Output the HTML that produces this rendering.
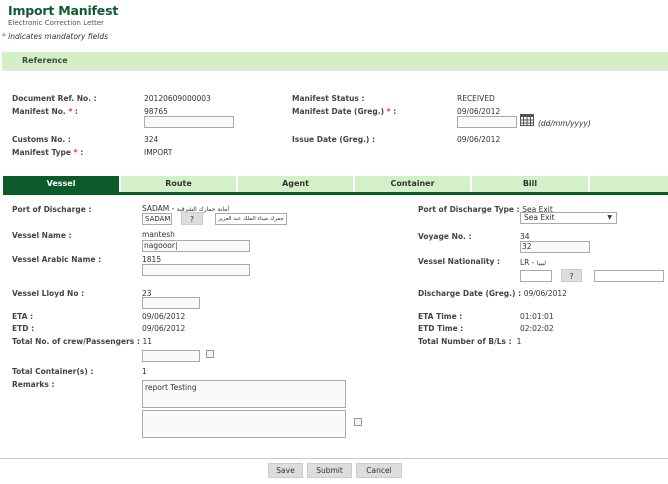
<!DOCTYPE html>
<html><head><meta charset="utf-8"><style>
*{margin:0;padding:0;box-sizing:border-box}
body{width:668px;height:484px;background:#fff;position:relative;overflow:hidden;font-family:"DejaVu Sans","Liberation Sans","Noto Sans CJK SC",sans-serif;font-size:7.5px;color:#333}
.a{position:absolute;white-space:nowrap;line-height:9px}
.l{font-weight:bold;color:#444}
.r{color:#e33}
.in{position:absolute;border:1px solid #aaa;background:#fafafa;height:12px}
.bt{position:absolute;background:#ddd;border:1px solid #ccc;text-align:center;line-height:13px;color:#333}
.tab{position:absolute;top:176px;height:16px;background:#d4f0c8;border-right:2px solid #fff;font-weight:bold;text-align:center;line-height:16px;color:#333;font-size:8px}
.cb{position:absolute;width:8px;height:8px;border:1px solid #999;background:#f4f4f4}
</style></head><body>
<div class="a" style="left:8px;top:3px;font-size:12.5px;line-height:16px;font-weight:bold;color:#0f5a32;letter-spacing:-0.2px">Import Manifest</div>
<div class="a" style="left:8px;top:19px;font-size:7px;color:#555">Electronic Correction Letter</div>
<div class="a" style="left:2px;top:32px;font-style:italic;color:#333"><span class="r">*</span> indicates mandatory fields</div>
<div style="position:absolute;left:2px;top:52px;width:666px;height:17px;background:#d4efc6"></div>
<div style="position:absolute;left:2px;top:69px;width:666px;height:2px;background:#e6e6e6"></div>
<div class="a l" style="left:22px;top:56px;font-size:8px;color:#3c4a3c">Reference</div>

<div class="a l" style="left:12px;top:94px">Document Ref. No. :</div>
<div class="a" style="left:144px;top:94px">20120609000003</div>
<div class="a l" style="left:12px;top:107px">Manifest No. <span class="r">*</span> :</div>
<div class="a" style="left:144px;top:107px">98765</div>
<div class="in" style="left:144px;top:116px;width:90px"></div>
<div class="a l" style="left:12px;top:135px">Customs No. :</div>
<div class="a" style="left:144px;top:135px">324</div>
<div class="a l" style="left:12px;top:148px">Manifest Type <span class="r">*</span> :</div>
<div class="a" style="left:144px;top:148px">IMPORT</div>

<div class="a l" style="left:292px;top:94px">Manifest Status :</div>
<div class="a" style="left:457px;top:94px">RECEIVED</div>
<div class="a l" style="left:292px;top:107px">Manifest Date (Greg.) <span class="r">*</span> :</div>
<div class="a" style="left:457px;top:107px">09/06/2012</div>
<div class="in" style="left:457px;top:116px;width:60px"></div>
<svg style="position:absolute;left:520px;top:114px" width="14" height="12"><rect x="0.5" y="0.5" width="13" height="11" fill="#fff" stroke="#555"/><rect x="0" y="0" width="14" height="3" fill="#555"/><path d="M0 6h14M0 9h14M3.5 3v9M7 3v9M10.5 3v9" stroke="#555" stroke-width="1"/></svg>
<div class="a" style="left:538px;top:119px;font-style:italic">(dd/mm/yyyy)</div>
<div class="a l" style="left:292px;top:135px">Issue Date (Greg.) :</div>
<div class="a" style="left:457px;top:135px">09/06/2012</div>

<div class="tab" style="left:3px;width:118px;background:#0a5a2a;color:#fff">Vessel</div>
<div class="tab" style="left:121px;width:117px">Route</div>
<div class="tab" style="left:238px;width:117px">Agent</div>
<div class="tab" style="left:355px;width:117px">Container</div>
<div class="tab" style="left:472px;width:118px">Bill</div>
<div class="tab" style="left:590px;width:78px;border:0"></div>
<div style="position:absolute;left:3px;top:192px;width:665px;height:3px;background:#0a5a2a"></div>

<div class="a l" style="left:12px;top:205px">Port of Discharge :</div>
<div class="a" style="left:142px;top:204px">SADAM - <span style="font-size:6px">أمانة جمارك الشرقية</span></div>
<div class="in" style="left:142px;top:213px;width:30px;font-size:7px;line-height:10px;padding-left:2px">SADAM</div>
<div class="bt" style="left:181px;top:212px;width:22px;height:13px">?</div>
<div class="in" style="left:215px;top:213px;width:72px;font-size:5.5px;line-height:10px;text-align:center;background:#fff">جمرك ميناء الملك عبد العزيز</div>
<div class="a l" style="left:12px;top:231px">Vessel Name :</div>
<div class="a" style="left:142px;top:230px">mantesh</div>
<div class="in" style="left:142px;top:240px;width:108px;line-height:10px;padding-left:1px">nagooor|</div>
<div class="a l" style="left:12px;top:255px">Vessel Arabic Name :</div>
<div class="a" style="left:142px;top:255px">1815</div>
<div class="in" style="left:142px;top:264px;width:108px"></div>
<div class="a l" style="left:12px;top:289px">Vessel Lloyd No :</div>
<div class="a" style="left:142px;top:289px">23</div>
<div class="in" style="left:142px;top:297px;width:58px"></div>
<div class="a l" style="left:12px;top:312px">ETA :</div>
<div class="a" style="left:142px;top:312px">09/06/2012</div>
<div class="a l" style="left:12px;top:324px">ETD :</div>
<div class="a" style="left:142px;top:324px">09/06/2012</div>
<div class="a l" style="left:12px;top:337px">Total No. of crew/Passengers : <span style="font-weight:normal;color:#333">11</span></div>
<div class="in" style="left:142px;top:350px;width:58px"></div>
<div class="cb" style="left:206px;top:350px"></div>
<div class="a l" style="left:12px;top:367px">Total Container(s) :</div>
<div class="a" style="left:142px;top:367px">1</div>
<div class="a l" style="left:12px;top:380px">Remarks :</div>
<div class="in" style="left:142px;top:380px;width:204px;height:28px;padding:2px">report Testing</div>
<div class="in" style="left:142px;top:410px;width:204px;height:28px"></div>
<div class="cb" style="left:354px;top:418px"></div>

<div class="a l" style="left:418px;top:205px">Port of Discharge Type : <span style="font-weight:normal;color:#333">Sea Exit</span></div>
<div class="in" style="left:520px;top:212px;width:97px;background:#fff;line-height:10px;padding-left:3px">Sea Exit<span style="position:absolute;right:4px;font-size:6px">▼</span></div>
<div class="a l" style="left:418px;top:232px">Voyage No. :</div>
<div class="a" style="left:520px;top:232px">34</div>
<div class="in" style="left:520px;top:241px;width:70px;line-height:10px;padding-left:1px">32</div>
<div class="a l" style="left:418px;top:257px">Vessel Nationality :</div>
<div class="a" style="left:520px;top:258px">LR - <span style="font-size:6px">ليبيا</span></div>
<div class="in" style="left:520px;top:270px;width:32px;background:#fff"></div>
<div class="bt" style="left:561px;top:269px;width:21px;height:13px">?</div>
<div class="in" style="left:594px;top:270px;width:70px;background:#fff"></div>
<div class="a l" style="left:418px;top:289px">Discharge Date (Greg.) : <span style="font-weight:normal;color:#333">09/06/2012</span></div>
<div class="a l" style="left:418px;top:312px">ETA Time :</div>
<div class="a" style="left:520px;top:312px">01:01:01</div>
<div class="a l" style="left:418px;top:324px">ETD Time :</div>
<div class="a" style="left:520px;top:324px">02:02:02</div>
<div class="a l" style="left:418px;top:337px">Total Number of B/Ls : <span style="font-weight:normal;color:#333">&nbsp;1</span></div>

<div style="position:absolute;left:0;top:458px;width:668px;height:1px;background:#ccc"></div>
<div class="bt" style="left:268px;top:463px;width:35px;height:15px">Save</div>
<div class="bt" style="left:307px;top:463px;width:45px;height:15px">Submit</div>
<div class="bt" style="left:356px;top:463px;width:46px;height:15px">Cancel</div>
</body></html>
